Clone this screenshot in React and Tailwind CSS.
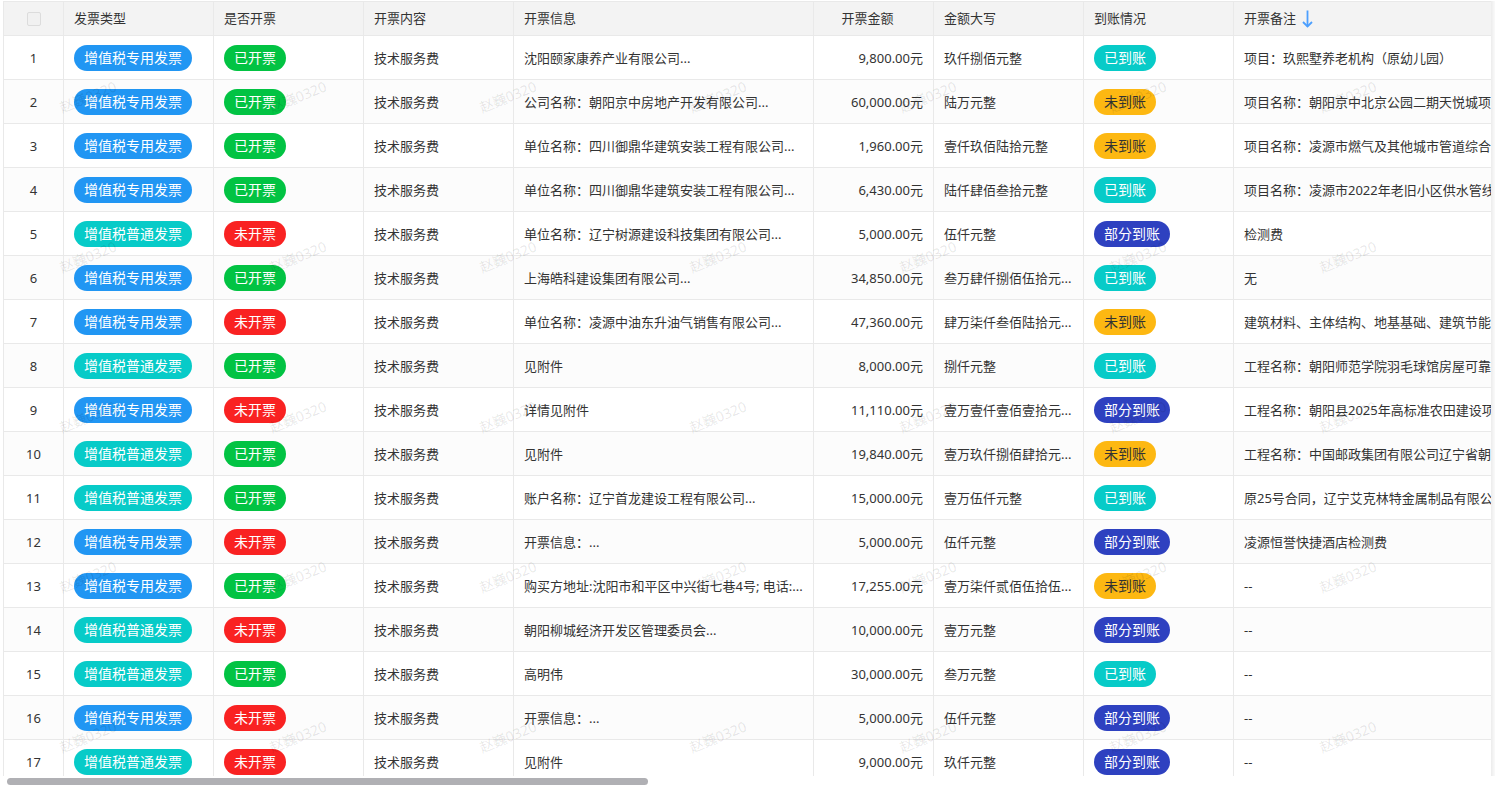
const FONT = "font-['Noto_Sans','Noto_Sans_CJK_SC',sans-serif]";

const TYPE_TAG = {
  zhuan: { label: "增值税专用发票", cls: "bg-[#2196f3] text-white" },
  pu: { label: "增值税普通发票", cls: "bg-[#07cbc8] text-white" },
};
const OPEN_TAG = {
  yes: { label: "已开票", cls: "bg-[#02c343] text-white" },
  no: { label: "未开票", cls: "bg-[#f92222] text-white" },
};
const PAY_TAG = {
  done: { label: "已到账", cls: "bg-[#07cbc8] text-white" },
  none: { label: "未到账", cls: "bg-[#fdb812] text-[#333]" },
  part: { label: "部分到账", cls: "bg-[#2e41c0] text-white" },
};

const rows = [
  ["zhuan", "yes", "沈阳颐家康养产业有限公司...", "9,800.00元", "玖仟捌佰元整", "done", "项目：玖熙墅养老机构（原幼儿园）"],
  ["zhuan", "yes", "公司名称：朝阳京中房地产开发有限公司...", "60,000.00元", "陆万元整", "none", "项目名称：朝阳京中北京公园二期天悦城项目"],
  ["zhuan", "yes", "单位名称：四川御鼎华建筑安装工程有限公司...", "1,960.00元", "壹仟玖佰陆拾元整", "none", "项目名称：凌源市燃气及其他城市管道综合整治"],
  ["zhuan", "yes", "单位名称：四川御鼎华建筑安装工程有限公司...", "6,430.00元", "陆仟肆佰叁拾元整", "done", "项目名称：凌源市2022年老旧小区供水管线改造"],
  ["pu", "no", "单位名称：辽宁树源建设科技集团有限公司...", "5,000.00元", "伍仟元整", "part", "检测费"],
  ["zhuan", "yes", "上海皓科建设集团有限公司...", "34,850.00元", "叁万肆仟捌佰伍拾元...", "done", "无"],
  ["zhuan", "no", "单位名称：凌源中油东升油气销售有限公司...", "47,360.00元", "肆万柒仟叁佰陆拾元...", "none", "建筑材料、主体结构、地基基础、建筑节能工程"],
  ["pu", "yes", "见附件", "8,000.00元", "捌仟元整", "done", "工程名称：朝阳师范学院羽毛球馆房屋可靠性鉴定"],
  ["zhuan", "no", "详情见附件", "11,110.00元", "壹万壹仟壹佰壹拾元...", "part", "工程名称：朝阳县2025年高标准农田建设项目"],
  ["pu", "yes", "见附件", "19,840.00元", "壹万玖仟捌佰肆拾元...", "none", "工程名称：中国邮政集团有限公司辽宁省朝阳市"],
  ["pu", "yes", "账户名称：辽宁首龙建设工程有限公司...", "15,000.00元", "壹万伍仟元整", "done", "原25号合同，辽宁艾克林特金属制品有限公司"],
  ["zhuan", "no", "开票信息：...", "5,000.00元", "伍仟元整", "part", "凌源恒誉快捷酒店检测费"],
  ["zhuan", "yes", "购买方地址:沈阳市和平区中兴街七巷4号; 电话:...", "17,255.00元", "壹万柒仟贰佰伍拾伍...", "none", "--"],
  ["pu", "no", "朝阳柳城经济开发区管理委员会...", "10,000.00元", "壹万元整", "part", "--"],
  ["pu", "yes", "高明伟", "30,000.00元", "叁万元整", "done", "--"],
  ["zhuan", "no", "开票信息：...", "5,000.00元", "伍仟元整", "part", "--"],
  ["pu", "no", "见附件", "9,000.00元", "玖仟元整", "part", "--"],
];

const headers = ["发票类型", "是否开票", "开票内容", "开票信息", "开票金额", "金额大写", "到账情况"];

function Tag({ tag }) {
  return (
    <span className={`inline-flex h-[26px] items-center rounded-[13px] px-[10px] text-sm leading-none ${tag.cls}`}>
      {tag.label}
    </span>
  );
}

function Cell({ children, className = "" }) {
  return (
    <td className={`overflow-hidden whitespace-nowrap border-r border-b border-[#e9e9e9] px-[10px] ${className}`}>
      {children}
    </td>
  );
}

function Watermarks() {
  const tiles = Array.from({ length: 35 });
  return (
    <div className="pointer-events-none absolute left-[-20px] top-[16px] grid grid-cols-[repeat(7,210px)] auto-rows-[160px]">
      {tiles.map((_, i) => (
        <div key={i} className="flex items-center justify-center">
          <span className="-rotate-[22deg] whitespace-nowrap text-sm leading-none text-black/10">赵巍0320</span>
        </div>
      ))}
    </div>
  );
}

export default function App() {
  return (
    <div className={`relative h-[787px] w-[1495px] overflow-hidden bg-white pt-px text-[13px] text-[#333] ${FONT}`}>
      <div className="flex h-[775px]">
        <div className="relative ml-[3px] w-[1488px] overflow-hidden">
          <table className="w-[1621px] table-fixed border-separate border-spacing-0">
            <colgroup>
              <col className="w-[61px]" />
              <col className="w-[150px]" />
              <col className="w-[150px]" />
              <col className="w-[150px]" />
              <col className="w-[300px]" />
              <col className="w-[120px]" />
              <col className="w-[150px]" />
              <col className="w-[150px]" />
              <col className="w-[390px]" />
            </colgroup>
            <thead>
              <tr className="h-[35px] bg-[#f3f3f3] text-left">
                <th className="border-t border-r border-b border-l border-[#e9e9e9] font-normal">
                  <span className="mx-auto block h-[14px] w-[14px] rounded-[2px] border border-[#dcdcdc] bg-[#f1f1f1]" />
                </th>
                {headers.map((h, i) => (
                  <th
                    key={h}
                    className={`border-t border-r border-b border-[#e9e9e9] pl-[10px] font-normal ${i === 4 ? "pr-[22px] text-center" : "pr-[10px]"}`}
                  >
                    {h}
                  </th>
                ))}
                <th className="border-t border-r border-b border-[#e9e9e9] px-[10px] font-normal">
                  <span className="flex items-center gap-[5px]">
                    开票备注
                    <svg width="12" height="18" viewBox="0 0 12 18" fill="none" stroke="#4c9ffe" strokeWidth="1.8">
                      <path d="M6.5 0.5V16.5" />
                      <path d="M2 12L6.5 16.5L11 12" />
                    </svg>
                  </span>
                </th>
              </tr>
            </thead>
            <tbody>
              {rows.map((r, i) => (
                <tr key={i} className={`h-[44px] ${i % 2 === 1 ? "bg-[#fcfcfc]" : "bg-white"}`}>
                  <td className="border-r border-b border-l border-[#e9e9e9] pt-[2px] text-center">{i + 1}</td>
                  <Cell><Tag tag={TYPE_TAG[r[0]]} /></Cell>
                  <Cell><Tag tag={OPEN_TAG[r[1]]} /></Cell>
                  <Cell className="pt-[2px]">技术服务费</Cell>
                  <Cell className="pt-[2px]">{r[2]}</Cell>
                  <Cell className="pt-[2px] text-right">{r[3]}</Cell>
                  <Cell className="pt-[2px]">{r[4]}</Cell>
                  <Cell><Tag tag={PAY_TAG[r[5]]} /></Cell>
                  <Cell className="pt-[2px]">{r[6]}</Cell>
                </tr>
              ))}
            </tbody>
          </table>
          <Watermarks />
        </div>
        <div className="w-[4px] bg-gradient-to-r from-[#ececec] to-[#fafafa]" />
      </div>
      <div className="ml-[7px] mt-[2px] h-[7px] w-[641px] rounded-full bg-[#b0b0b4]" />
    </div>
  );
}
